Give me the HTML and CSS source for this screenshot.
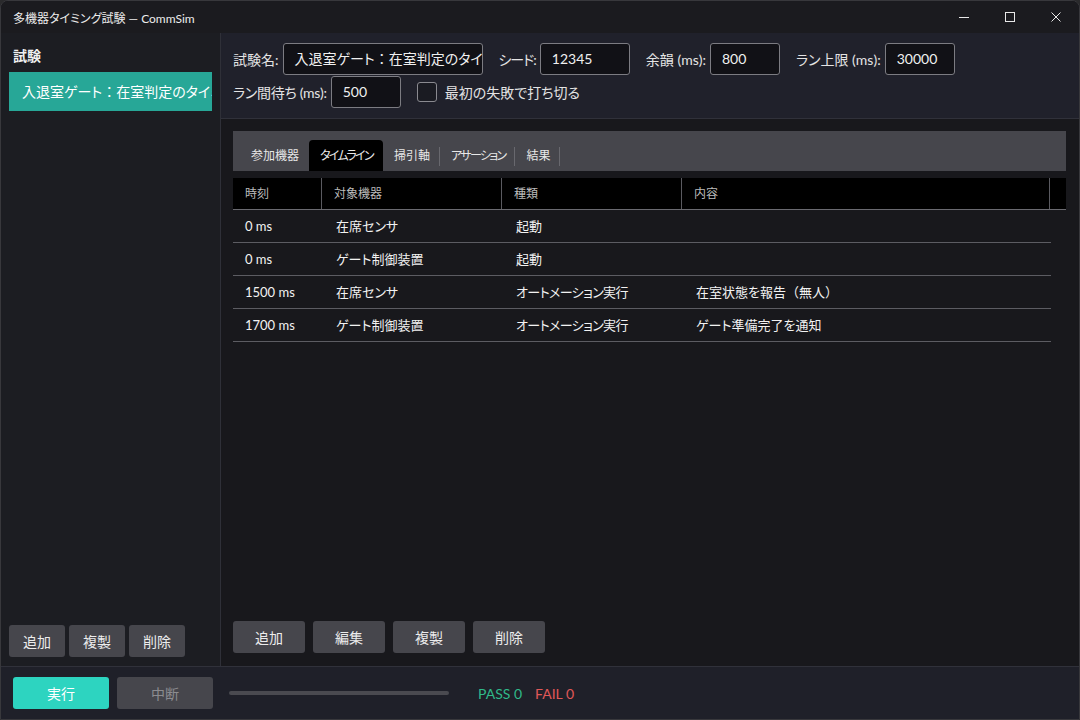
FILE: index.html
```html
<!DOCTYPE html>
<html lang="ja">
<head>
    <meta charset="UTF-8">
    <meta name="viewport" content="width=device-width, initial-scale=1.0">
    <title>多機器タイミング試験 — CommSim</title>
    <link rel="stylesheet" href="styles.css">
</head>
<body>
    <div class="window">
        <div class="titlebar">
            <div class="title">多機器タイミング試験 — CommSim</div>
            <div class="win-controls">
                <span class="win-btn">
                    <svg width="12" height="12" viewBox="0 0 12 12"><path d="M1 6.5h10" stroke="#e8e8e8" stroke-width="1"/></svg>
                </span>
                <span class="win-btn">
                    <svg width="12" height="12" viewBox="0 0 12 12"><rect x="1.5" y="1.5" width="9" height="9" fill="none" stroke="#e8e8e8" stroke-width="1"/></svg>
                </span>
                <span class="win-btn">
                    <svg width="12" height="12" viewBox="0 0 12 12"><path d="M1.5 1.5l9 9M10.5 1.5l-9 9" stroke="#e8e8e8" stroke-width="1"/></svg>
                </span>
            </div>
        </div>

        <div class="main">
            <div class="sidebar">
                <div class="side-title">試験</div>
                <div class="test-list">
                    <div class="test-item selected">入退室ゲート<span class="fw">：</span>在室判定のタイミング</div>
                </div>
                <div class="side-buttons">
                    <button class="btn small">追加</button>
                    <button class="btn small">複製</button>
                    <button class="btn small">削除</button>
                </div>
            </div>

            <div class="editor">
                <div class="settings">
                    <div class="settings-row">
                        <label class="field-label">試験名:</label>
                        <div class="input name-input">入退室ゲート<span class="fw">：</span>在室判定のタイミング</div>
                        <label class="field-label gap kana">シード:</label>
                        <div class="input seed-input">12345</div>
                        <label class="field-label gap">余韻 (ms):</label>
                        <div class="input num-input">800</div>
                        <label class="field-label gap">ラン上限 (ms):</label>
                        <div class="input num-input">30000</div>
                    </div>
                    <div class="settings-row">
                        <label class="field-label tight">ラン間待ち (ms):</label>
                        <div class="input num-input">500</div>
                        <span class="checkbox"></span>
                        <label class="field-label">最初の失敗で打ち切る</label>
                    </div>
                </div>

                <div class="content">
                    <div class="tabs">
                        <div class="tab">参加機器</div>
                        <div class="tab active kana">タイムライン</div>
                        <div class="tab sep">掃引軸</div>
                        <div class="tab sep kana">アサーション</div>
                        <div class="tab sep">結果</div>
                    </div>

                    <div class="table">
                        <div class="thead">
                            <div class="th">時刻</div>
                            <div class="th">対象機器</div>
                            <div class="th">種類</div>
                            <div class="th">内容</div>
                            <div class="th last"></div>
                        </div>
                        <div class="tbody">
                            <div class="tr">
                                <div class="td">0 ms</div>
                                <div class="td">在席センサ</div>
                                <div class="td">起動</div>
                                <div class="td"></div>
                            </div>
                            <div class="tr">
                                <div class="td">0 ms</div>
                                <div class="td">ゲート制御装置</div>
                                <div class="td">起動</div>
                                <div class="td"></div>
                            </div>
                            <div class="tr">
                                <div class="td">1500 ms</div>
                                <div class="td">在席センサ</div>
                                <div class="td kana">オートメーション実行</div>
                                <div class="td">在室状態を報告<span class="fw">（</span>無人<span class="fw">）</span></div>
                            </div>
                            <div class="tr">
                                <div class="td">1700 ms</div>
                                <div class="td">ゲート制御装置</div>
                                <div class="td kana">オートメーション実行</div>
                                <div class="td">ゲート準備完了を通知</div>
                            </div>
                        </div>
                    </div>

                    <div class="row-buttons">
                        <button class="btn wide">追加</button>
                        <button class="btn wide">編集</button>
                        <button class="btn wide">複製</button>
                        <button class="btn wide">削除</button>
                    </div>
                </div>
            </div>
        </div>

        <div class="statusbar">
            <button class="btn run">実行</button>
            <button class="btn stop">中断</button>
            <div class="progress"><div class="progress-fill" style="width: 0%;"></div></div>
            <span class="pass">PASS 0</span>
            <span class="fail">FAIL 0</span>
        </div>
    </div>
</body>
</html>
```

FILE: styles.css
```css
* {
    box-sizing: border-box;
}
html, body {
    margin: 0;
    padding: 0;
    background-color: #2a2a2c;
}
body {
    width: 1080px;
    height: 720px;
    overflow: hidden;
    font-family: Lato, "Noto Sans CJK JP", sans-serif;
    font-feature-settings: "palt";
    color: #e6e6e6;
}
/* full-width punctuation keeps its width */
.fw {
    font-feature-settings: normal;
}
/* katakana runs set a little tighter */
.kana {
    letter-spacing: -1px;
}
.window {
    width: 1080px;
    height: 720px;
    display: flex;
    flex-direction: column;
    background-color: #1b1b1f;
    border: 1px solid #38383c;
    border-radius: 8px 8px 0 0;
    overflow: hidden;
}

/* title bar */
.titlebar {
    height: 32px;
    flex-shrink: 0;
    display: flex;
    align-items: center;
    justify-content: space-between;
    background-color: #1b1b1f;
}
.title {
    padding-left: 12px;
    font-size: 12px;
    color: #ececec;
}
.win-controls {
    display: flex;
    height: 100%;
}
.win-btn {
    width: 46px;
    display: flex;
    align-items: center;
    justify-content: center;
}

.main {
    flex: 1;
    display: flex;
    min-height: 0;
}

/* sidebar */
.sidebar {
    width: 220px;
    flex-shrink: 0;
    display: flex;
    flex-direction: column;
    background-color: #1c1d22;
    border-right: 1px solid #2f3038;
    padding: 8px;
}
.side-title {
    font-size: 14px;
    font-weight: bold;
    padding: 4px 4px 0 4px;
    height: 31px;
    color: #f0f0f0;
}
.test-list {
    flex: 1;
}
.test-item {
    height: 39px;
    line-height: 39px;
    padding: 0 13px;
    font-size: 14px;
    white-space: nowrap;
    overflow: hidden;
    color: #ffffff;
}
.test-item.selected {
    background-color: #27a797;
}
.side-buttons {
    display: flex;
    gap: 4px;
    padding-bottom: 1px;
}

/* buttons */
.btn {
    font-family: inherit;
    font-feature-settings: "palt";
    border: none;
    border-radius: 3px;
    background-color: #46464c;
    color: #ececec;
    font-size: 14px;
    height: 32px;
    padding: 0;
    cursor: pointer;
}
.btn.small {
    width: 56px;
}
.btn.wide {
    width: 72px;
}

/* editor */
.editor {
    flex: 1;
    display: flex;
    flex-direction: column;
    min-width: 0;
}
.settings {
    background-color: #20212b;
    border-bottom: 1px solid #30313a;
    padding: 10px 12px;
    display: flex;
    flex-direction: column;
    gap: 1px;
}
.settings-row {
    display: flex;
    align-items: center;
    height: 32px;
}
.field-label {
    font-size: 14px;
    color: #e4e4e4;
    margin-right: 4px;
    white-space: nowrap;
}
.field-label.tight {
    letter-spacing: -0.3px;
}
.field-label.gap {
    margin-left: 16px;
}
.input {
    height: 32px;
    line-height: 30px;
    border: 1px solid #7c7c82;
    border-radius: 3px;
    background-color: #111116;
    font-size: 14px;
    color: #f0f0f0;
    padding: 0 11px;
    white-space: nowrap;
    overflow: hidden;
}
.name-input {
    width: 200px;
}
.seed-input {
    width: 90px;
}
.num-input {
    width: 70px;
}
.checkbox {
    width: 20px;
    height: 20px;
    border: 1px solid #8a8a90;
    border-radius: 3px;
    background-color: #1a1b22;
    margin-left: 16px;
    margin-right: 8px;
}

/* content */
.content {
    flex: 1;
    display: flex;
    flex-direction: column;
    background-color: #18181c;
    padding: 12px 13px 12px 12px;
    min-height: 0;
}
.tabs {
    height: 40px;
    flex-shrink: 0;
    background-color: #46464c;
    display: flex;
    align-items: flex-end;
    padding-left: 7px;
}
.tab {
    height: 31px;
    line-height: 31px;
    font-size: 12px;
    padding: 0 10px 0 11px;
    color: #e8e8e8;
    position: relative;
}
.tab.kana {
    letter-spacing: -1.7px;
}
.tab.active {
    background-color: #000000;
    border-radius: 4px 4px 0 0;
}
.tab.sep::after {
    content: "";
    position: absolute;
    right: 0;
    top: 7px;
    height: 19px;
    border-right: 1px solid #68686e;
}

.table {
    flex: 1;
    margin-top: 7px;
}
.thead {
    display: grid;
    grid-template-columns: 89px 180px 180px 368px 1fr;
    height: 32px;
    background-color: #000000;
    border-bottom: 1px solid #6a6a70;
}
.th {
    font-size: 12px;
    color: #bcbcbc;
    line-height: 31px;
    padding-left: 12px;
    border-right: 1px solid #5a5a60;
}
.th.last {
    border-right: none;
}
.tbody {
    width: 818px;
}
.tr {
    display: grid;
    grid-template-columns: 89px 180px 180px 369px;
    height: 33px;
    border-bottom: 1px solid #5c5c62;
}
.td {
    font-size: 13px;
    line-height: 32px;
    padding-left: 12px;
    color: #f2f2f2;
    white-space: nowrap;
}
.td:nth-child(n+2) {
    padding-left: 14px;
}
.td.kana {
    letter-spacing: -0.6px;
}
.row-buttons {
    display: flex;
    gap: 8px;
    padding-bottom: 1px;
}

/* status bar */
.statusbar {
    height: 53px;
    flex-shrink: 0;
    display: flex;
    align-items: center;
    padding: 0 12px;
    background-color: #1f2029;
    border-top: 1px solid #30313a;
}
.btn.run {
    width: 96px;
    background-color: #2dd4c0;
    color: #ffffff;
}
.btn.stop {
    width: 96px;
    margin-left: 8px;
    color: #8c8c90;
}
.progress {
    width: 220px;
    height: 4px;
    border-radius: 2px;
    background-color: #4a4a50;
    margin-left: 16px;
    margin-right: 29px;
}
.progress-fill {
    height: 100%;
    background-color: #2dd4c0;
}
.pass {
    font-size: 14px;
    color: #30b98a;
    margin-right: 13px;
}
.fail {
    font-size: 14px;
    color: #e05858;
}
```
